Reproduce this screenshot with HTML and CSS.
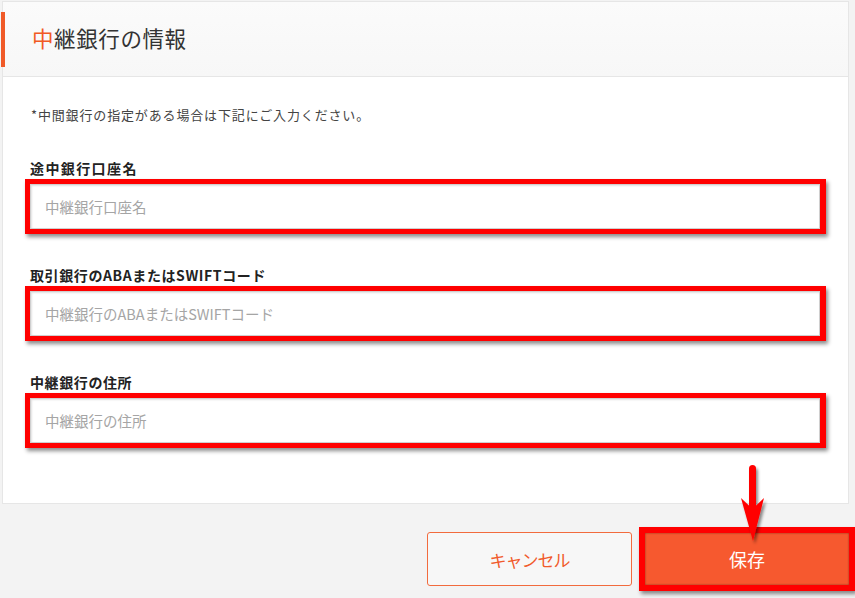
FILE: index.html
```html
<!DOCTYPE html>
<html lang="ja">
<head>
<meta charset="utf-8">
<title>中継銀行の情報</title>
<link rel="stylesheet" href="styles.css">
</head>
<body>
<div class="page">
  <section class="card">
    <header class="card-header">
      <h2 class="title"><span class="accent">中</span>継銀行の情報</h2>
    </header>
    <div class="card-body">
      <p class="note">*中間銀行の指定がある場合は下記にご入力ください。</p>
      <div class="field">
        <label class="label">途中銀行口座名</label>
        <div class="mark"><input class="input" type="text" placeholder="中継銀行口座名"></div>
      </div>
      <div class="field">
        <label class="label">取引銀行のABAまたはSWIFTコード</label>
        <div class="mark"><input class="input" type="text" placeholder="中継銀行のABAまたはSWIFTコード"></div>
      </div>
      <div class="field">
        <label class="label">中継銀行の住所</label>
        <div class="mark"><input class="input" type="text" placeholder="中継銀行の住所"></div>
      </div>
    </div>
  </section>
  <div class="actions">
    <button class="btn btn-cancel" type="button">キャンセル</button>
    <div class="mark mark-btn"><button class="btn btn-save" type="button">保存</button></div>
  </div>
  <svg class="arrow" width="40" height="90" viewBox="0 0 40 90" aria-hidden="true">
    <defs>
      <filter id="sh" x="-50%" y="-20%" width="200%" height="150%">
        <feDropShadow dx="2" dy="3" stdDeviation="1.6" flood-color="#000" flood-opacity="0.45"/>
      </filter>
    </defs>
    <g filter="url(#sh)" fill="#ff0000">
      <rect x="11" y="4" width="7" height="48" rx="3.5"/>
      <polygon points="3,37 14.5,48 26,37 15,80"/>
    </g>
  </svg>
</div>
</body>
</html>
```
FILE: styles.css
```css
* { box-sizing: border-box; }
html, body { margin: 0; padding: 0; }
body {
  background: #f3f3f3;
  font-family: "Noto Sans CJK JP", "Noto Sans", sans-serif;
  color: #333;
  width: 855px;
  height: 598px;
  overflow: hidden;
}
.page { position: relative; width: 855px; height: 598px; }
.card {
  margin: 1px 6px 0 2px;
  background: #fff;
  border: 1px solid #e6e6e6;
}
.card-header {
  height: 75px;
  padding-top: 10px;
  background: linear-gradient(#fbfbfb, #f7f7f7);
  border-bottom: 1px solid #e6e6e6;
}
.title {
  margin: 0 0 0 -2px;
  height: 55px;
  line-height: 52px;
  border-left: 4px solid #f05a28;
  padding-left: 27px;
  font-size: 21.5px;
  font-weight: 400;
  color: #333;
  letter-spacing: 0.6px;
}
.accent { color: #f15a24; }
.card-body { padding: 28px 22px 55px 22px; }
.note {
  margin: 0 0 0 6px;
  font-size: 13px;
  line-height: 20px;
  color: #444;
  letter-spacing: 0.85px;
}
.field { margin-top: 31px; }
.field:first-of-type { margin-top: 33px; }
.label {
  display: block;
  margin: 0 0 1px 5px;
  font-size: 14px;
  line-height: 20px;
  font-weight: 700;
  color: #222;
  letter-spacing: 0.6px;
}
.field:first-of-type .label { letter-spacing: 1.4px; }
.mark {
  border: 5px solid #ff0000;
  border-right-width: 6px;
  box-shadow: 2px 3px 4px rgba(0, 0, 0, 0.45);
}
.input {
  display: block;
  width: 100%;
  height: 45px;
  margin: 0;
  border: 1px solid #cfcfcf;
  padding: 0 14px;
  font-family: "Noto Sans CJK JP", "Noto Sans", sans-serif;
  font-size: 14.5px;
  color: #333;
  background: #fff;
  box-shadow: inset 1px 1px 2px rgba(0, 0, 0, 0.12);
  outline: none;
}
.input::placeholder { color: #a5a5a5; }
.actions {
  display: flex;
  justify-content: flex-end;
  align-items: center;
  gap: 7px;
  margin-top: 23px;
}
.btn {
  font-family: "Noto Sans CJK JP", "Noto Sans", sans-serif;
  font-size: 18px;
  font-weight: 400;
  border-radius: 3px;
  cursor: pointer;
}
.btn-cancel {
  width: 205px;
  height: 54px;
  background: #f7f7f7;
  color: #f15a2b;
  border: 1px solid #f26b3d;
  font-size: 17px;
  letter-spacing: -1px;
}
.mark-btn {
  border-width: 6px;
  box-shadow: 2px 3px 4px rgba(0, 0, 0, 0.45);
}
.btn-save {
  display: block;
  width: 204px;
  height: 52px;
  background: #f6592f;
  color: #fff;
  border: none;
  border-radius: 0;
  box-shadow: inset 0 0 2px rgba(0, 0, 0, 0.5);
}
.arrow {
  position: absolute;
  left: 738px;
  top: 460px;
}
```
